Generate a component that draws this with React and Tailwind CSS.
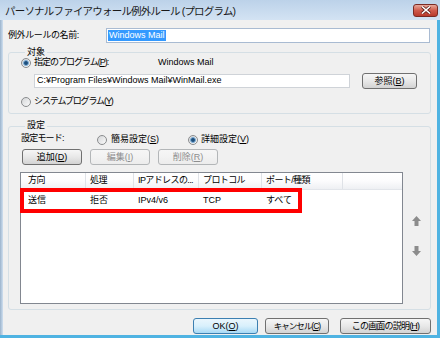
import React from 'react';

const Radio = ({ checked }) => (
  <span className="w-[10px] h-[10px] rounded-full border border-[#8a8c8e] bg-linear-to-br from-[#d4d6d8] to-[#fbfbfb] flex items-center justify-center shrink-0">
    {checked && <span className="w-[6px] h-[6px] rounded-full bg-[#1d4f7c] border border-[#7fb0da]" />}
  </span>
);

const Btn = ({ children, w, kind = 'normal', track = '' }) => {
  const styles = {
    normal: 'border-[#707070] from-[#f6f6f6] via-[#e8e8e8] to-[#d3d3d3] text-black',
    def: 'border-[#3c7fb1] from-[#eaf6fd] via-[#d9f0fc] to-[#a7d9f5] text-black',
    off: 'border-[#b3b6b8] from-[#f6f6f6] via-[#f2f2f2] to-[#ececec] text-[#8e8e8e]',
  };
  return (
    <div className={`${w} ${track} h-[16px] shrink-0 rounded-[3px] border bg-linear-to-b ${styles[kind]} flex items-center justify-center leading-none whitespace-nowrap`}>
      {children}
    </div>
  );
};

const U = ({ children }) => <span className="underline underline-offset-1">{children}</span>;

const Arrow = ({ down }) => (
  <svg width="9" height="10" viewBox="0 0 9 10" className={down ? 'rotate-180' : ''}>
    <path d="M4.5 0 L9 5 L6.5 5 L6.5 10 L2.5 10 L2.5 5 L0 5 Z" fill="#8c8c8c" />
  </svg>
);

const cols = [
  { w: 'w-[65px] pl-[7px]', h: '方向', v: '送信' },
  { w: 'w-[48px] pl-[4px]', h: '処理', v: '拒否' },
  { w: 'w-[65px] pl-[4px]', h: 'IPアドレスの...', v: 'IPv4/v6' },
  { w: 'w-[63px] pl-[4px]', h: 'プロトコル', v: 'TCP' },
  { w: 'w-[81px] pl-[4px]', h: 'ポート/種類', v: 'すべて' },
];

export default function App() {
  return (
    <div className="w-[440px] h-[338px] flex flex-col bg-[#c6daee] font-['Liberation_Sans','Noto_Sans_CJK_JP',sans-serif] text-[9px] text-black overflow-hidden">
      {/* Title bar */}
      <div className="h-[20px] shrink-0 flex items-center pl-[5px] pr-[2px] pt-[2px] bg-linear-to-b from-[#bcd2e9] to-[#d3e3f3]">
        <span className="text-[10.5px] tracking-[-0.8px] text-[#1a1a1a] flex-1 leading-none">パーソナルファイアウォール例外ルール (プログラム)</span>
        <div className="w-[25px] h-[13px] -mt-[2px] rounded-[3px] border border-[#7a2b24] bg-linear-to-b from-[#e7a89c] via-[#cf5a4b] to-[#b83a2c] flex items-center justify-center">
          <svg width="10" height="8" viewBox="0 0 10 8">
            <path d="M1 0.5 L9 7.5 M9 0.5 L1 7.5" stroke="#5a1a14" strokeWidth="3" />
            <path d="M1 0.5 L9 7.5 M9 0.5 L1 7.5" stroke="#ffffff" strokeWidth="1.6" />
          </svg>
        </div>
      </div>

      {/* Body */}
      <div className="flex-1 flex border-b-[3px] border-[#4fb3e2]">
        <div className="w-[3px] shrink-0 bg-linear-to-r from-[#9bb3cc] to-[#d0e0f0]" />
        <div className="flex-1 bg-[#f0f0f0] pl-[5px] pr-[6px] flex flex-col">
          {/* Name row */}
          <div className="mt-[8px] h-[15px] flex items-center">
            <span className="w-[98px] shrink-0 tracking-[-0.4px]">例外ルールの名前:</span>
            <div className="flex-1 mr-[1px] h-[15px] bg-white border border-[#a9bbd2] flex items-center pl-[1px]">
              <span className="bg-[#3399ff] text-white px-[1px] leading-[11px]">Windows Mail</span>
            </div>
          </div>

          {/* 対象 */}
          <fieldset className="mt-[4px] border border-[#d5dfe5] rounded-[3px] pl-[12px] pb-[6px]">
            <legend className="ml-[4px] px-[2px] h-[10px] leading-[10px]">対象</legend>
            <div className="h-[11px] flex items-center">
              <Radio checked />
              <span className="ml-[3px] w-[124px] tracking-[-1px]">指定のプログラム(<U>P</U>):</span>
              <span>Windows Mail</span>
            </div>
            <div className="mt-[5px] h-[16px] flex items-center">
              <div className="ml-[13px] w-[316px] h-[14px] bg-white border border-[#cfd3d8] flex items-center pl-[2px]">
                C:¥Program Files¥Windows Mail¥WinMail.exe
              </div>
              <div className="ml-[12px]">
                <Btn w="w-[55px]">参照(<U>B</U>)</Btn>
              </div>
            </div>
            <div className="mt-[7px] h-[11px] flex items-center">
              <Radio />
              <span className="ml-[3px] tracking-[-1.1px]">システムプログラム(<U>Y</U>)</span>
            </div>
          </fieldset>

          {/* 設定 */}
          <fieldset className="mt-[7px] border border-[#d5dfe5] rounded-[3px] pl-[11px] pb-[5px]">
            <legend className="ml-[5px] px-[2px] h-[10px] leading-[8px]">設定</legend>
            <div className="mt-[3px] h-[12px] flex items-center">
              <span className="ml-[1px] w-[76px] tracking-[-0.8px] -mt-[3px]">設定モード:</span>
              <div className="w-[91px] flex items-center">
                <Radio />
                <span className="ml-[4px]">簡易設定(<U>S</U>)</span>
              </div>
              <div className="flex items-center">
                <Radio checked />
                <span className="ml-[3px]">詳細設定(<U>V</U>)</span>
              </div>
            </div>
            <div className="mt-[3px] ml-[2px] flex gap-[8px]">
              <Btn w="w-[60px]">追加(<U>D</U>)</Btn>
              <Btn w="w-[60px]" kind="off">編集(<U>I</U>)</Btn>
              <Btn w="w-[60px]" kind="off">削除(<U>R</U>)</Btn>
            </div>
            <div className="mt-[7px] flex">
              <div className="relative w-[383px] h-[132px] bg-white border border-[#828790]">
                <div className="h-[17px] flex bg-linear-to-b from-[#ffffff] via-[#fcfcfd] to-[#eef0f3] border-b border-[#e2e5ea]">
                  {cols.map((c) => (
                    <div key={c.h} className={`${c.w} h-full flex items-center border-r border-[#dfe2e7] whitespace-nowrap overflow-hidden tracking-[-0.6px]`}>{c.h}</div>
                  ))}
                  <div className="flex-1" />
                </div>
                <div className="h-[20px] mt-[1px] flex">
                  {cols.map((c) => (
                    <div key={c.v} className={`${c.w} h-full flex items-center whitespace-nowrap`}>{c.v}</div>
                  ))}
                </div>
                <div className="absolute left-[-1px] top-[15px] w-[282px] h-[25px] border-[4px] border-[#ff0000]" />
              </div>
              <div className="flex-1 flex flex-col items-center pt-[44px] gap-[20px]">
                <Arrow />
                <Arrow down />
              </div>
            </div>
          </fieldset>

          {/* Bottom buttons */}
          <div className="mt-[8px] flex justify-end">
            <Btn w="w-[65px]" kind="def">OK(<U>O</U>)</Btn>
            <div className="ml-[7px]"><Btn w="w-[64px]" track="text-[8.5px] tracking-[-1px]">キャンセル(<U>C</U>)</Btn></div>
            <div className="ml-[11px]"><Btn w="w-[91px]" track="tracking-[-0.8px]">この画面の説明(<U>H</U>)</Btn></div>
          </div>
        </div>
        <div className="w-[3px] shrink-0 bg-[#4fb3e2]" />
      </div>
    </div>
  );
}
